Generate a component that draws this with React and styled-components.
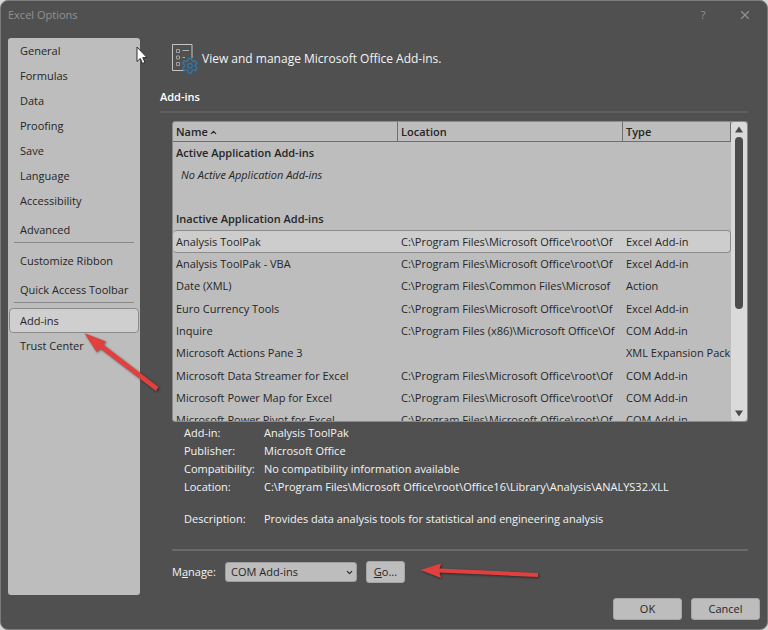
import { useState } from 'react';
import styled, { createGlobalStyle } from 'styled-components';
import { ChevronDown, ChevronUp, X } from 'lucide-react';

const menuItems = [
  { label: 'General' },
  { label: 'Formulas' },
  { label: 'Data' },
  { label: 'Proofing' },
  { label: 'Save' },
  { label: 'Language' },
  { label: 'Accessibility' },
  { label: 'Advanced', spaced: true, divider: true },
  { label: 'Customize Ribbon' },
  { label: 'Quick Access Toolbar', spaced: true, divider: true },
  { label: 'Add-ins' },
  { label: 'Trust Center' },
];

const officeRoot = 'C:\\Program Files\\Microsoft Office\\root\\Of';

const inactiveAddins = [
  { name: 'Analysis ToolPak', location: officeRoot, type: 'Excel Add-in' },
  { name: 'Analysis ToolPak - VBA', location: officeRoot, type: 'Excel Add-in' },
  { name: 'Date (XML)', location: 'C:\\Program Files\\Common Files\\Microsof', type: 'Action' },
  { name: 'Euro Currency Tools', location: officeRoot, type: 'Excel Add-in' },
  { name: 'Inquire', location: 'C:\\Program Files (x86)\\Microsoft Office\\Of', type: 'COM Add-in' },
  { name: 'Microsoft Actions Pane 3', location: '', type: 'XML Expansion Pack' },
  { name: 'Microsoft Data Streamer for Excel', location: officeRoot, type: 'COM Add-in' },
  { name: 'Microsoft Power Map for Excel', location: officeRoot, type: 'COM Add-in' },
  { name: 'Microsoft Power Pivot for Excel', location: officeRoot, type: 'COM Add-in' },
];

const details = [
  { term: 'Add-in:', value: 'Analysis ToolPak' },
  { term: 'Publisher:', value: 'Microsoft Office' },
  { term: 'Compatibility:', value: 'No compatibility information available' },
  { term: 'Location:', value: 'C:\\Program Files\\Microsoft Office\\root\\Office16\\Library\\Analysis\\ANALYS32.XLL' },
  { term: 'Description:', value: 'Provides data analysis tools for statistical and engineering analysis', spaced: true },
];

export default function App() {
  const [page, setPage] = useState('Add-ins');
  const [selected, setSelected] = useState('Analysis ToolPak');

  return (
    <>
      <GlobalStyle />
      <Dialog>
        <TitleBar>
          <Title>Excel Options</Title>
          <TitleButton aria-label="Help">?</TitleButton>
          <TitleButton aria-label="Close"><X size={14} strokeWidth={2} /></TitleButton>
        </TitleBar>

        <Body>
          <Sidebar>
            {menuItems.map((item) => (
              <MenuEntry key={item.label} $spaced={item.spaced} $divider={item.divider}>
                <MenuButton $active={page === item.label} onClick={() => setPage(item.label)}>
                  {item.label}
                </MenuButton>
              </MenuEntry>
            ))}
          </Sidebar>

          <Main>
            <Heading>
              <AddinsIcon />
              View and manage Microsoft Office Add-ins.
            </Heading>
            <SectionTitle>Add-ins</SectionTitle>

            <Section>
              <ListBox>
                <Table>
                  <colgroup>
                    <col />
                    <col />
                    <TypeColumn />
                  </colgroup>
                  <thead>
                    <tr>
                      <HeadCell>Name <SortIcon size={9} strokeWidth={3} /></HeadCell>
                      <HeadCell>Location</HeadCell>
                      <HeadCell>Type</HeadCell>
                    </tr>
                  </thead>
                  <tbody>
                    <tr><GroupCell colSpan={3}>Active Application Add-ins</GroupCell></tr>
                    <tr><EmptyCell colSpan={3}>No Active Application Add-ins</EmptyCell></tr>
                    <tr><Cell colSpan={3} /></tr>
                    <tr><GroupCell colSpan={3}>Inactive Application Add-ins</GroupCell></tr>
                  </tbody>
                  <tbody>
                    {inactiveAddins.map((addin) => (
                      <Row
                        key={addin.name}
                        $selected={selected === addin.name}
                        onClick={() => setSelected(addin.name)}
                      >
                        <Cell>{addin.name}</Cell>
                        <Cell>{addin.location}</Cell>
                        <Cell>{addin.type}</Cell>
                      </Row>
                    ))}
                  </tbody>
                </Table>
                <Scrollbar>
                  <ScrollArrow viewBox="0 0 8 6"><path d="M4 0 8 6H0Z" /></ScrollArrow>
                  <ScrollTrack><ScrollThumb /></ScrollTrack>
                  <ScrollArrow viewBox="0 0 8 6"><path d="M4 6 8 0H0Z" /></ScrollArrow>
                </Scrollbar>
              </ListBox>

              <Details>
                {details.map((detail) => (
                  <DetailRow key={detail.term} $spaced={detail.spaced}>
                    <dt>{detail.term}</dt>
                    <dd>{detail.value}</dd>
                  </DetailRow>
                ))}
              </Details>

              <ManageRow>
                <ManageLabel htmlFor="manage">M<u>a</u>nage:</ManageLabel>
                <SelectWrapper>
                  <Select id="manage" defaultValue="COM Add-ins">
                    <option>Excel Add-ins</option>
                    <option>COM Add-ins</option>
                    <option>Actions</option>
                    <option>XML Expansion Packs</option>
                    <option>Disabled Items</option>
                  </Select>
                  <SelectIcon size={9} strokeWidth={3} />
                </SelectWrapper>
                <Button $small><u>G</u>o...</Button>
              </ManageRow>
            </Section>
          </Main>
        </Body>

        <Footer>
          <Button>OK</Button>
          <Button>Cancel</Button>
        </Footer>

        <MenuArrow viewBox="0 0 78 64">
          <path d="M2.500 4.300 24 12.500 20.800 15.300 76.500 58 74 62 18 19.500 14.500 23Z" />
        </MenuArrow>
        <GoArrow viewBox="0 0 124 20">
          <path d="M3.500 11 24 4.500 22.500 9.500 121 14V18L22.500 13.500 24 19Z" />
        </GoArrow>
        <Pointer viewBox="0 0 12 19">
          <path d="M1 1V15.500L4.300 12.500 6.500 17.500 9 16.400 6.800 11.600H11Z" />
        </Pointer>
      </Dialog>
    </>
  );
}

function AddinsIcon() {
  return (
    <svg width="26" height="30" viewBox="0 0 26 30" fill="none" aria-hidden="true">
      <path d="M12 26.500H0.500V0.500H20V14" stroke="#c4c4c4" />
      <path d="M4.500 5.500h3v3h-3zM4.500 12h3v3h-3zM4.500 18.500h3v3h-3z" stroke="#a0a0a0" />
      <path d="M10.500 6.500H17M10.500 13.500H13" stroke="#b0b0b0" />
      <path
        d="M16.400 14.500h3l.6 2.300 1.200.7 2.300-.7 1.500 2.600-1.700 1.600v1.400l1.700 1.600-1.500 2.600-2.300-.7-1.200.7-.6 2.300h-3l-.6-2.300-1.200-.7-2.300.7-1.500-2.600 1.700-1.600V21l-1.700-1.600 1.500-2.600 2.300.7 1.200-.7z"
        fill="#505050"
        stroke="#2e75a8"
        strokeWidth="1.500"
      />
      <circle cx="17.900" cy="21.700" r="2.300" stroke="#2e75a8" strokeWidth="1.500" />
    </svg>
  );
}

const GlobalStyle = createGlobalStyle`
  * {
    box-sizing: border-box;
  }

  body {
    margin: 0;
    background: #d8d8d8;
    font-family: 'Open Sans', 'Noto Sans', sans-serif;
    font-size: 11px;
    line-height: 18px;
    color: #262626;
  }

  button, select {
    font: inherit;
    color: inherit;
  }
`;

const Dialog = styled.div`
  position: relative;
  display: flex;
  flex-direction: column;
  min-height: 100vh;
  border: 1px solid #7c7c7c;
  border-radius: 8px;
  background: #505050;
`;

const TitleBar = styled.header`
  display: flex;
  align-items: center;
  height: 37px;
  padding: 0 8px 10px 7px;
`;

const Title = styled.h1`
  flex: 1;
  margin: 0;
  font-size: 11px;
  font-weight: 400;
  color: #929292;
`;

const TitleButton = styled.button`
  display: flex;
  align-items: center;
  justify-content: center;
  width: 28px;
  height: 26px;
  margin-left: 14px;
  padding: 0;
  border: none;
  background: none;
  color: #929292;
`;

const Body = styled.div`
  display: flex;
  flex: 1;
  padding: 0 19px 0 7px;
`;

const Sidebar = styled.nav`
  width: 132px;
  padding: 0 1px;
  border-radius: 3px;
  background: #bdbdbd;
`;

const MenuEntry = styled.div`
  margin-top: ${props => props.$spaced ? '4px' : '0'};
  padding-bottom: ${props => props.$divider ? '5px' : '0'};

  &::after {
    content: '';
    display: ${props => props.$divider ? 'block' : 'none'};
    height: 1px;
    margin: 0 5px;
    background: #898989;
  }
`;

const MenuButton = styled.button`
  display: block;
  width: 100%;
  height: 25px;
  padding: 0 10px;
  border: 1px solid ${props => props.$active ? '#8c8c8c' : 'transparent'};
  border-radius: 4px;
  background: ${props => props.$active ? '#cfcfcf' : 'transparent'};
  text-align: left;
  white-space: nowrap;
`;

const Main = styled.main`
  flex: 1;
  min-width: 0;
  padding: 6px 0 0 20px;
`;

const Heading = styled.div`
  display: flex;
  align-items: center;
  gap: 4px;
  height: 30px;
  padding-left: 12px;
  font-size: 12px;
  color: #f4f4f4;
`;

const SectionTitle = styled.h2`
  margin: 14px 0 8px;
  padding-bottom: 5px;
  border-bottom: 2px solid #5f5f5f;
  font-size: 11px;
  font-weight: 600;
  color: #ffffff;
`;

const Section = styled.section`
  padding-left: 12px;
`;

const ListBox = styled.div`
  display: flex;
  align-items: flex-start;
  height: 301px;
  overflow: hidden;
  border: 1px solid #8a8a8a;
  border-radius: 3px;
  background: #bdbdbd;
`;

const Table = styled.table`
  flex: 1;
  width: 100%;
  min-width: 0;
  table-layout: fixed;
  border-spacing: 0;
`;

const TypeColumn = styled.col`
  width: 108px;
`;

const Cell = styled.td`
  height: 22px;
  padding: 0 0 0 3px;
  overflow: hidden;
  line-height: 18px;
  white-space: nowrap;
`;

const HeadCell = styled.th`
  height: 20px;
  padding: 0 0 0 3px;
  border-right: 1px solid #6f6f6f;
  border-bottom: 1px solid #6f6f6f;
  font-weight: 600;
  text-align: left;
`;

const SortIcon = styled(ChevronUp)`
  margin-left: -2px;
  vertical-align: middle;
`;

const GroupCell = styled(Cell)`
  font-weight: 600;
`;

const EmptyCell = styled(Cell)`
  padding-left: 8px;
  font-style: italic;
`;

const Row = styled.tr`
  ${Cell} {
    border: solid ${props => props.$selected ? '#8c8c8c' : 'transparent'};
    border-width: 1px 0;
    background: ${props => props.$selected ? '#cdcdcd' : 'none'};
  }

  &:nth-child(3n + 1) ${Cell} {
    height: 23px;
  }

  ${Cell}:first-child {
    border-radius: 4px 0 0 4px;
  }

  ${Cell}:last-child {
    border-right-width: 1px;
    border-radius: 0 4px 4px 0;
  }
`;

const Scrollbar = styled.div`
  display: flex;
  flex-direction: column;
  flex-shrink: 0;
  align-items: center;
  align-self: stretch;
  width: 16px;
  padding: 4px 0;
  border-radius: 4px;
  background: #dadada;
`;

const ScrollArrow = styled.svg`
  width: 8px;
  height: 7px;
  fill: #4b4b4b;
`;

const ScrollTrack = styled.div`
  flex: 1;
  padding: 4px 0;
`;

const ScrollThumb = styled.div`
  width: 8px;
  height: 64%;
  border-radius: 4px;
  background: #4d4d4d;
`;

const Details = styled.dl`
  margin: 2px 0 21px;
  padding-left: 12px;
  color: #f4f4f4;
`;

const DetailRow = styled.div`
  display: flex;
  margin-top: ${props => props.$spaced ? '14px' : '0'};

  dt {
    width: 80px;
  }

  dd {
    margin: 0;
  }
`;

const ManageRow = styled.div`
  display: flex;
  align-items: center;
  padding-top: 10px;
  border-top: 2px solid #6a6a6a;
`;

const ManageLabel = styled.label`
  width: 53px;
  color: #f4f4f4;
`;

const SelectWrapper = styled.div`
  position: relative;
  display: flex;
  width: 132px;
  margin-right: 9px;
`;

const Select = styled.select`
  width: 100%;
  height: 20px;
  padding: 0 20px 0 5px;
  appearance: none;
  border: 1px solid #9c9c9c;
  border-radius: 3px;
  background: #bdbdbd;
`;

const SelectIcon = styled(ChevronDown)`
  position: absolute;
  top: 6px;
  right: 3px;
  pointer-events: none;
`;

const Button = styled.button`
  width: ${props => props.$small ? '39px' : '69px'};
  height: 22px;
  padding: 0;
  border: 1px solid #a6a6a6;
  border-radius: 3px;
  background: #bdbdbd;
`;

const Footer = styled.footer`
  display: flex;
  justify-content: flex-end;
  gap: 9px;
  padding: 3px 7px 9px;
`;

const Annotation = styled.svg`
  position: absolute;
  pointer-events: none;
`;

const MenuArrow = styled(Annotation)`
  top: 328px;
  left: 81px;
  width: 78px;
  height: 64px;
  fill: #e2403e;
  filter: drop-shadow(1px 1px 1px #00000080);
`;

const GoArrow = styled(Annotation)`
  top: 558px;
  left: 416px;
  width: 124px;
  height: 20px;
  fill: #e2403e;
  filter: drop-shadow(1px 1px 1px #00000080);
`;

const Pointer = styled(Annotation)`
  top: 45px;
  left: 135px;
  width: 12px;
  height: 19px;
  fill: #ffffff;
  stroke: #2a2a2a;
`;
